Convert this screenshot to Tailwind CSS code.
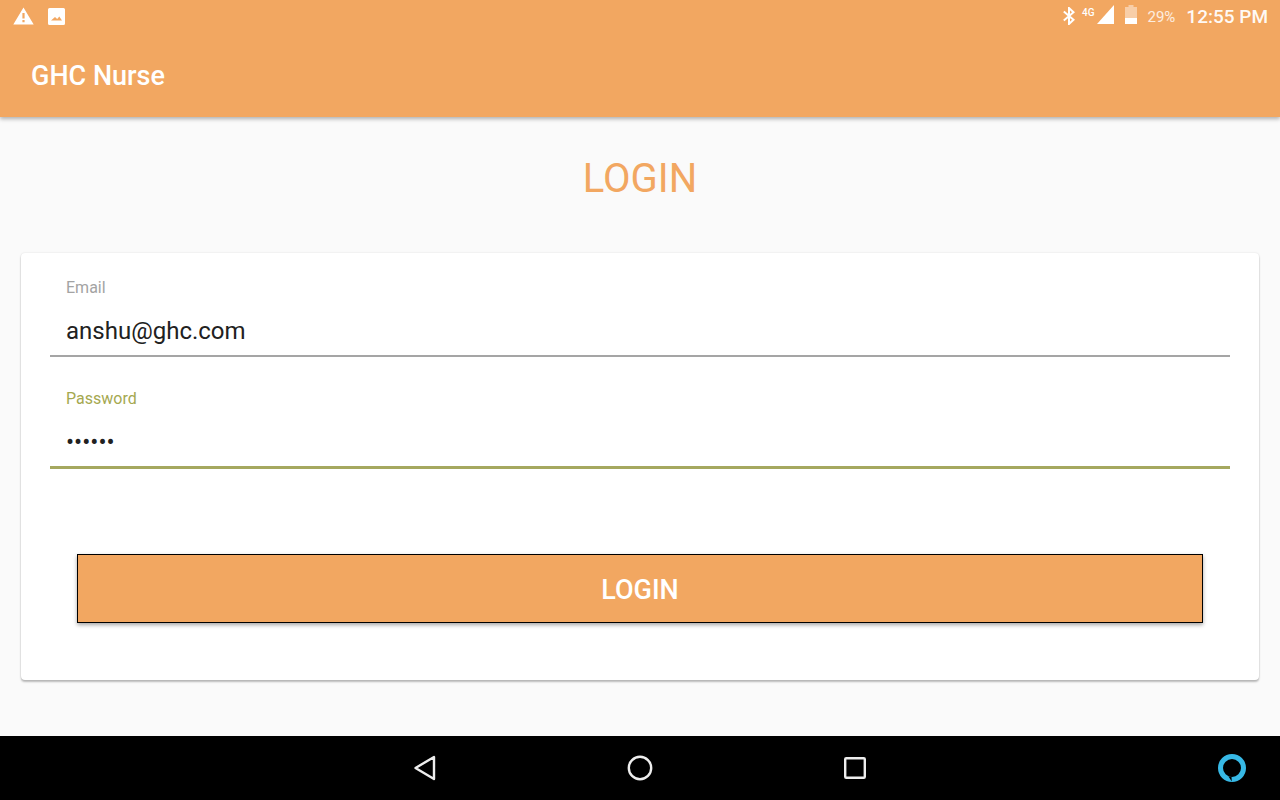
<!DOCTYPE html>
<html lang="en">
<head>
  <meta charset="UTF-8">
  <meta name="viewport" content="width=device-width, initial-scale=1.0">
  <title>GHC Nurse</title>
  <script src="https://cdn.jsdelivr.net/npm/@tailwindcss/browser@4"></script>
</head>
<body class="bg-[#fafafa] font-[Roboto,sans-serif] overflow-hidden">
  <div class="flex flex-col w-[1280px] h-[800px]">

    <!-- Status bar + toolbar -->
    <header class="relative z-10 h-[117px] shrink-0 bg-[#f2a761] shadow-[0_2px_4px_rgba(0,0,0,0.3)] text-white">
      <div class="flex items-center justify-between h-[32px] pl-[13px] pr-[12px]">
        <div class="flex items-center gap-[14px]">
          <svg width="21" height="18" viewBox="0 0 21 18"><path fill-rule="evenodd" fill="#fff" d="M10.5 0.5 L20.7 17.5 L0.3 17.5 Z M9.4 6 V11.5 H11.6 V6 Z M9.4 13 V15.2 H11.6 V13 Z"/></svg>
          <svg class="mt-[1px]" width="17" height="17" viewBox="0 0 17 17"><path fill-rule="evenodd" fill="#fff" d="M1.5 0 H15.5 A1.5 1.5 0 0 1 17 1.5 V15.5 A1.5 1.5 0 0 1 15.5 17 H1.5 A1.5 1.5 0 0 1 0 15.5 V1.5 A1.5 1.5 0 0 1 1.5 0 Z M3 12.5 H14 L11.3 8.5 L9.2 11 L7 9 Z"/></svg>
        </div>
        <div class="flex items-center">
          <svg class="mr-[7px] mb-[1px]" width="12" height="18" viewBox="0 0 12 18"><path fill="none" stroke="#fff" stroke-width="2" d="M0.8 4.6 L10.5 12.8 L6 17 V1 L10.5 5.2 L0.8 13.4"/></svg>
          <span class="text-[10px] font-medium leading-none self-start mt-[7px] mr-[3px]">4G</span>
          <svg class="mr-[11px] mb-[3px]" width="17" height="19" viewBox="0 0 17 19"><path fill="#fff" d="M17 0 V19 H0 Z"/></svg>
          <svg class="mr-[10px] mb-[3px]" width="12" height="19" viewBox="0 0 12 19"><path fill="#fff" fill-opacity="0.45" d="M3.5 0 H8.5 V2 H12 V13 H0 V2 H3.5 Z"/><path fill="#fff" d="M0 13 H12 V19 H0 Z"/></svg>
          <span class="text-[15px] text-white/80 mr-[11px] mt-[2px]">29%</span>
          <span class="text-[19px] font-medium text-white/95 mt-[2px]">12:55 PM</span>
        </div>
      </div>
      <h1 class="h-[85px] pl-[31px] text-[27px] leading-[88px] font-medium">GHC Nurse</h1>
    </header>

    <main class="flex-1 flex flex-col px-[21px]">
      <h2 class="mt-[38px] h-[48px] text-center text-[40px] leading-[48px] text-[#f2a761]">LOGIN</h2>

      <!-- Login card -->
      <form class="mt-[50px] h-[427px] bg-white rounded-[4px] shadow-[0_2px_2px_rgba(0,0,0,0.25),0_0_2px_rgba(0,0,0,0.12)] pt-[25px] px-[29px]">
        <label class="block h-[79px] border-b-2 border-[#a5a5a5]">
          <span class="block pl-[16px] text-[16px] leading-[20px] text-[#a3a3a3]">Email</span>
          <span class="block pl-[16px] mt-[17px] text-[24px] leading-[32px] text-[#212121]">anshu@ghc.com</span>
        </label>
        <label class="block mt-[32px] h-[80px] border-b-[3px] border-[#a5a85f]">
          <span class="block pl-[16px] text-[16px] leading-[20px] text-[#a5a84f]">Password</span>
          <span class="block pl-[16px] mt-[17px] text-[24px] leading-[32px] text-[#212121]">••••••</span>
        </label>
        <button type="button" class="block mt-[85px] mx-[27px] w-[1126px] h-[69px] pt-[4px] bg-[#f2a761] border border-black shadow-[0_2px_4px_rgba(0,0,0,0.35)] text-white text-[27px] font-medium">LOGIN</button>
      </form>
    </main>

    <!-- Navigation bar -->
    <nav class="relative h-[64px] shrink-0 bg-black flex items-center pl-[414px]">
      <svg width="22" height="26" viewBox="0 0 22 26"><path fill="none" stroke="#eee" stroke-width="2.4" stroke-linejoin="round" d="M20 2 V24 L1.5 13 Z"/></svg>
      <svg class="ml-[191px]" width="26" height="26" viewBox="0 0 26 26"><circle cx="13" cy="13" r="11.2" fill="none" stroke="#eee" stroke-width="2.4"/></svg>
      <svg class="ml-[191px]" width="22" height="22" viewBox="0 0 22 22"><rect x="1.2" y="1.2" width="19.6" height="19.6" rx="1" fill="none" stroke="#eee" stroke-width="2.4"/></svg>
      <svg class="absolute left-[1218px] top-[18px]" width="28" height="28" viewBox="0 0 28 28"><circle cx="14" cy="14" r="11.5" fill="none" stroke="#37b9e6" stroke-width="5"/><path fill="#000" d="M10.5 22.5 L13.8 27.5 L13.5 22.5 Z"/></svg>
    </nav>
  </div>
</body>
</html>
